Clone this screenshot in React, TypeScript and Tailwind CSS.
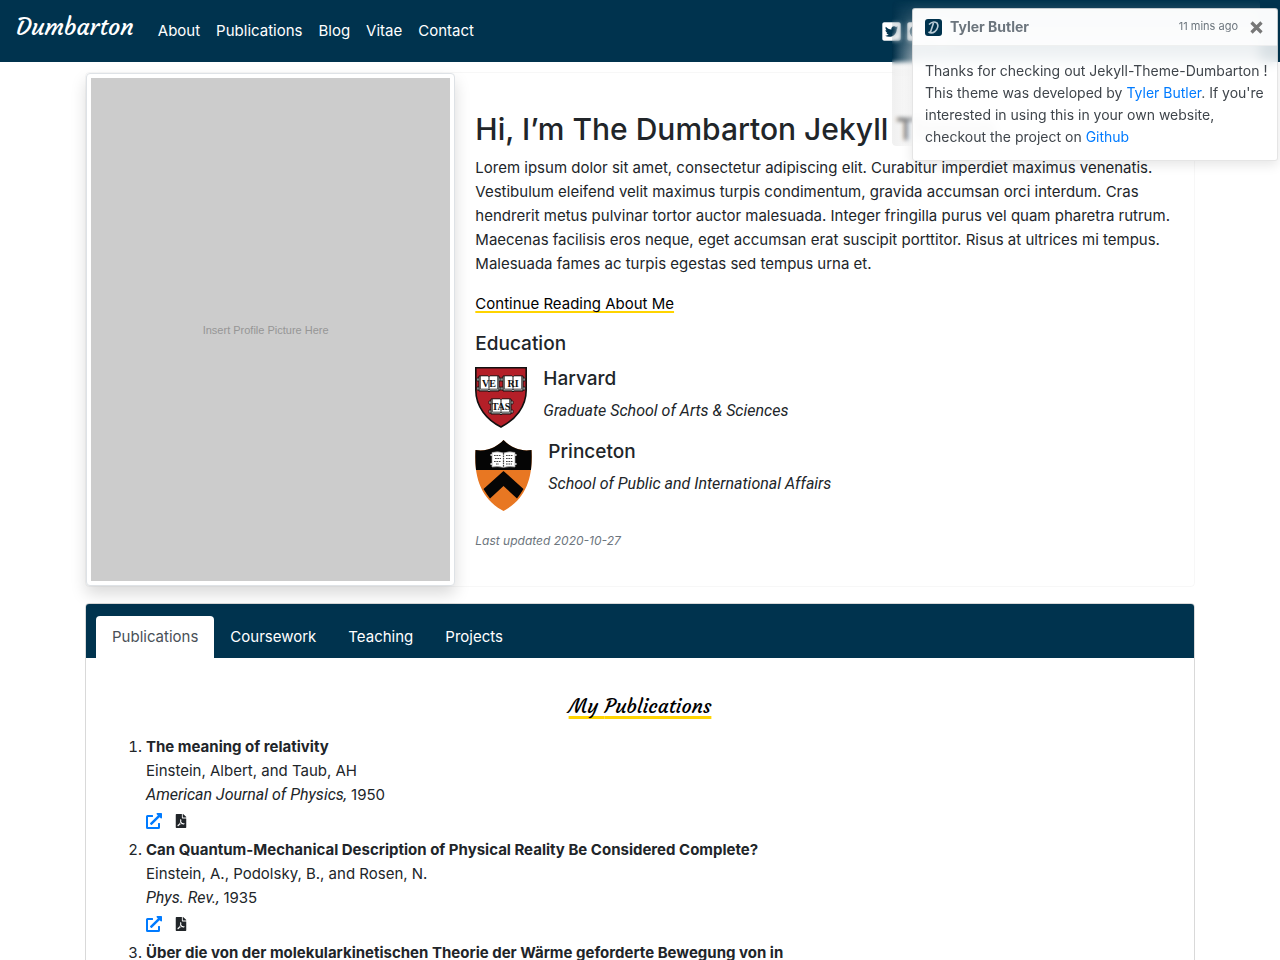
import { useState } from "react";
import { FaExternalLinkAlt, FaFilePdf, FaGithubSquare, FaLinkedin, FaTwitterSquare } from "react-icons/fa";

const navLinks = ["About", "Publications", "Blog", "Vitae", "Contact"];
const tabs = ["Publications", "Coursework", "Teaching", "Projects"];
const publications = [
  { title: "The meaning of relativity", authors: "Einstein, Albert, and Taub, AH", venue: "American Journal of Physics,", year: "1950" },
  { title: "Can Quantum-Mechanical Description of Physical Reality Be Considered Complete?", authors: "Einstein, A., Podolsky, B., and Rosen, N.", venue: "Phys. Rev.,", year: "1935" },
  { title: "Über die von der molekularkinetischen Theorie der Wärme geforderte Bewegung von in", authors: "Einstein, A.", venue: "Annalen der Physik,", year: "1905" },
];

function Book({ x, y, label }: { x: number; y: number; label: string }) {
  return (
    <g transform={`translate(${x} ${y})`}>
      <path d="M-2 3h24v3h-24zM-2 12h24v3h-24z" fill="#d8d8d8" stroke="#111" strokeWidth=".8" />
      <path d="M0 1h9l1 1 1-1h9v15h-9l-1 1-1-1H0z" fill="#a9a9a9" stroke="#111" strokeWidth="1" />
      <path d="M1.500 1h7.500l1 1v13l-1-1H1.500zM18.500 1H11l-1 1v13l1-1h7.500z" fill="#fff" stroke="#222" strokeWidth=".6" />
      <text x="10" y="11.500" textAnchor="middle" fontFamily="Liberation Serif, serif" fontWeight="bold" fontSize="10" fill="#111">{label}</text>
    </g>
  );
}

function HarvardShield() {
  return (
    <svg width="52" height="61" viewBox="0 0 52 61" className="shrink-0" aria-label="Harvard shield" role="img">
      <path d="M.8.8h50.400V23C51.200 40 40 53 26 60 12 53 .8 40 .8 23z" fill="#b41f28" stroke="#111" strokeWidth="1.600" />
      <Book x={4} y={8} label="VE" />
      <Book x={28} y={8} label="RI" />
      <Book x={16} y={31} label="TAS" />
    </svg>
  );
}

function PrincetonShield() {
  return (
    <svg width="57" height="71" viewBox="0 0 57 71" className="shrink-0" aria-label="Princeton shield" role="img">
      <path d="M28.500 0C34 6 44 12 56.500 10C58 34 53 58 28.500 71C4 58-1 34 .5 10C13 12 23 6 28.500 0z" fill="#e87722" />
      <path d="M28.500 0C34 6 44 12 56.500 10Q57 20 56 30H1Q0 20 .5 10C13 12 23 6 28.500 0z" fill="#050505" />
      <path d="M28.500 31 48.500 49Q45.500 54 42 58.500L28.500 46 15 58.500Q11.500 54 8.500 49z" fill="#050505" />
      <path d="M15.500 14h26v2h-26zM15.500 23h26v2h-26z" fill="#ddd" />
      <path d="M17 12.500q6-1.500 11.500.5 5.500-2 11.500-.5V27q-6-1-11.500.5Q23 26 17 27z" fill="#fff" stroke="#999" strokeWidth=".7" />
      <path d="M28.500 13v14M19 15.500h7M20 18.500h6M19 21.500h7M21 24h3M31 15.500h7M31 18.500h6M31 21.500h7M31 24h6" stroke="#444" strokeWidth="1.200" strokeDasharray="1.700 .7" fill="none" />
    </svg>
  );
}

function Toast({ onClose }: { onClose: () => void }) {
  return (
    <>
      <div className="absolute top-0 right-5 h-[146px] w-[368px] rounded bg-linear-to-r from-black/5 to-white/65 to-[24px] backdrop-blur-[2px] [mask-image:linear-gradient(to_bottom,transparent,black_60px)]" />
      <div className="absolute top-2 right-[2px] w-[366px] overflow-hidden rounded-[3px] border border-black/10 bg-white/85 text-sm shadow-[0_4px_12px_rgba(0,0,0,0.1)] backdrop-blur-[6px]" role="status">
        <div className="flex items-center border-b border-black/5 bg-white/85 px-3 py-1 text-[#6c757d]">
          <svg width="17" height="17" viewBox="0 0 17 17" aria-hidden="true" className="mr-2 shrink-0">
            <rect width="17" height="17" rx="3" fill="#00334e" />
            <path d="M4 5.500Q8 1.500 12 4 14.500 8 10 12.500 6.500 15 3.500 13M8.500 4 5.500 13" fill="none" stroke="#b9cbd6" strokeWidth="1.600" />
          </svg>
          <strong className="mr-auto text-sm leading-7 font-bold">Tyler Butler</strong>
          <small className="text-[11px]">11 mins ago</small>
          <button type="button" onClick={onClose} aria-label="Close" className="-mr-[2px] ml-2 cursor-pointer p-1">
            <svg width="13" height="13" viewBox="0 0 13 13" fill="none" stroke="#777" strokeWidth="3.200" aria-hidden="true"><path d="m1.500 1.500 10 10m0-10-10 10" /></svg>
          </button>
        </div>
        <p className="px-3 pt-[14px] pb-3 leading-[22px] whitespace-nowrap text-[#3f454b]">
          Thanks for checking out Jekyll-Theme-Dumbarton !<br />
          This theme was developed by <a href="#tyler" className="text-[#007bff]">Tyler Butler</a>. If you're<br />
          interested in using this in your own website,<br />
          checkout the project on <a href="#github" className="text-[#007bff]">Github</a>
        </p>
      </div>
    </>
  );
}

export default function App() {
  const [tab, setTab] = useState("Publications");
  const [toast, setToast] = useState(true);
  return (
    <div className="relative h-screen overflow-x-hidden overflow-y-auto bg-white font-['Inter',sans-serif] text-[15px] leading-6 text-[#212529] [scrollbar-width:none]">
      <nav className="flex h-[62px] items-center bg-[#00334e] px-4 text-white">
        <a href="#home" className="mr-6 pb-2 font-['Courgette',cursive] text-2xl leading-8">Dumbarton</a>
        <ul className="flex gap-4">
          {navLinks.map((label) => (
            <li key={label}><a href={`#${label.toLowerCase()}`}>{label}</a></li>
          ))}
        </ul>
        <div className="mr-[312px] ml-auto flex gap-1 text-[21px]">
          <a href="#twitter" aria-label="Twitter"><FaTwitterSquare /></a>
          <a href="#github" aria-label="GitHub"><FaGithubSquare /></a>
          <a href="#linkedin" aria-label="LinkedIn"><FaLinkedin /></a>
        </div>
      </nav>

      <main className="mx-auto max-w-[1140px] px-[15px] pt-[10px]">
        <section className="flex rounded border border-black/[0.03]">
          <div className="w-1/3 shrink-0 rounded border border-[#dee2e6] bg-white p-1 shadow-[0_8px_16px_rgba(0,0,0,0.15)]">
            <div className="flex h-[503px] items-center justify-center bg-[#cccccc] pr-[10px] font-['Liberation_Sans',sans-serif] text-[11px] text-[#969696]">Insert Profile Picture Here</div>
          </div>
          <div className="px-5 pt-[37px]">
            <h1 className="mb-2 text-[30px] leading-[38px] font-medium whitespace-nowrap">Hi, I’m The Dumbarton Jekyll Theme</h1>
            <p className="mb-4">
              Lorem ipsum dolor sit amet, consectetur adipiscing elit. Curabitur imperdiet maximus venenatis.<br />
              Vestibulum eleifend velit maximus turpis condimentum, gravida accumsan orci interdum. Cras<br />
              hendrerit metus pulvinar tortor auctor malesuada. Integer fringilla purus vel quam pharetra rutrum.<br />
              Maecenas facilisis eros neque, eget accumsan erat suscipit porttitor. Risus at ultrices mi tempus.<br />
              Malesuada fames ac turpis egestas sed tempus urna et.
            </p>
            <p className="mb-4"><a href="#about" className="text-black underline decoration-[#ffd400] decoration-2 underline-offset-2 [text-decoration-skip-ink:none]">Continue Reading About Me</a></p>
            <h2 className="mb-[11px] text-[19px] leading-6 font-medium">Education</h2>
            <div className="mb-3 flex gap-4">
              <HarvardShield />
              <div>
                <h3 className="mb-2 text-[19px] leading-6 font-medium">Harvard</h3>
                <p className="font-['Roboto',sans-serif] text-base italic">Graduate School of Arts &amp; Sciences</p>
              </div>
            </div>
            <div className="mb-5 flex gap-4">
              <PrincetonShield />
              <div>
                <h3 className="mb-2 text-[19px] leading-6 font-medium">Princeton</h3>
                <p className="font-['Roboto',sans-serif] text-base italic">School of Public and International Affairs</p>
              </div>
            </div>
            <p className="text-xs leading-5 text-[#6c757d] italic">Last updated 2020-10-27</p>
          </div>
        </section>

        <section className="mt-4 rounded border border-black/15">
          <div role="tablist" className="flex rounded-t-[3px] bg-[#00334e] px-[10px] pt-3">
            {tabs.map((label) => (
              <button key={label} type="button" role="tab" aria-selected={tab === label} onClick={() => setTab(label)} className={tab === label ? "cursor-pointer rounded-t bg-white px-4 py-[9px] text-[#495057]" : "cursor-pointer px-4 py-[9px] text-white"}>{label}</button>
            ))}
          </div>
          <div className="px-5 pt-8 pb-8">
            <h2 className="mb-[13px] text-center font-['Courgette',cursive] text-xl leading-8 text-black"><span className="underline decoration-[#ffd400] decoration-3 underline-offset-3 [text-decoration-skip-ink:none]">My {tab}</span></h2>
            <ol className="list-decimal pl-10">
              {publications.map((item) => (
                <li key={item.title}>
                  <strong>{item.title}</strong>
                  <p>{item.authors}</p>
                  <p><em className="font-['Roboto',sans-serif] text-base">{item.venue}</em> {item.year}</p>
                  <div className="flex h-[31px] items-center gap-3 pb-1">
                    <a href="#article" aria-label="Open article" className="text-base text-[#007bff]"><FaExternalLinkAlt /></a>
                    <a href="#pdf" aria-label="Open PDF" className="text-sm"><FaFilePdf /></a>
                  </div>
                </li>
              ))}
            </ol>
          </div>
        </section>
      </main>
      {toast && <Toast onClose={() => setToast(false)} />}
    </div>
  );
}
